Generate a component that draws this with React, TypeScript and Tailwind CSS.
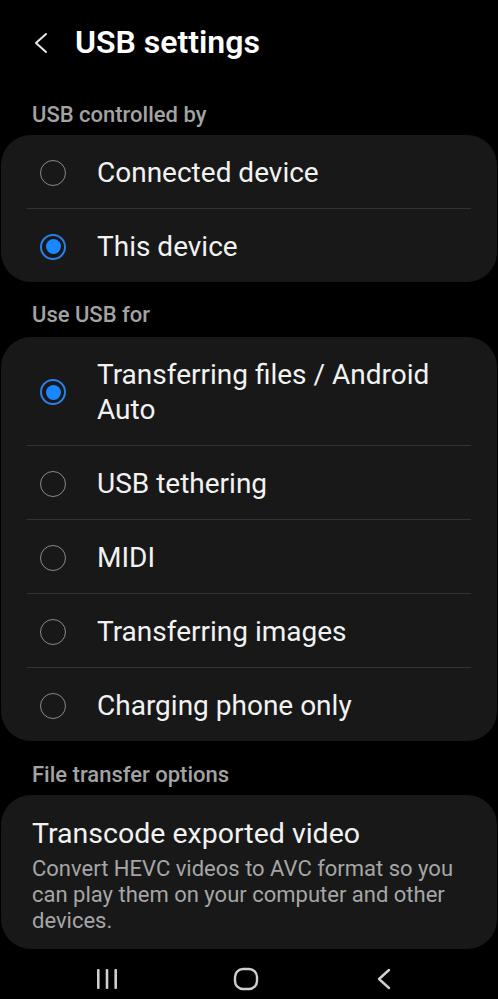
import React from 'react';

const font = { fontFamily: 'Roboto, "Noto Sans", sans-serif' };

const Radio = ({ checked }: { checked: boolean }) =>
  checked ? (
    <span className="w-[26px] h-[26px] shrink-0 rounded-full border-2 border-[#2a7fe8] flex items-center justify-center">
      <span className="w-[15px] h-[15px] rounded-full bg-[#1a86ff]" />
    </span>
  ) : (
    <span className="w-[26px] h-[26px] shrink-0 rounded-full border-[1.5px] border-[#8a8a8a]" />
  );

const Row = ({ label, checked, tall }: { label: string; checked?: boolean; tall?: boolean }) => (
  <div className={`flex items-center pl-[39px] pr-[26px] pt-[2px] ${tall ? 'h-[108px]' : 'h-[73px]'}`}>
    <Radio checked={!!checked} />
    <span className="ml-[31px] text-[28px] leading-[35px] text-[#f2f2f2] pr-[10px]">{label}</span>
  </div>
);

const Divider = () => <div className="mx-[26px] h-px bg-[#323232]" />;

const Label = ({ children, className }: { children: React.ReactNode; className: string }) => (
  <div className={`px-[32px] text-[22px] leading-[24px] font-medium text-[#a3a3a3] ${className}`}>{children}</div>
);

export default function App() {
  return (
    <div className="w-[498px] h-[999px] bg-black overflow-hidden flex flex-col" style={font}>
      {/* Header */}
      <div className="flex items-center pt-[22px] pl-[33px]">
        <svg width="16" height="22" viewBox="0 0 16 22" fill="none" className="mt-[2px]">
          <path d="M13 2 L3 11 L13 20" stroke="#e8e8e8" strokeWidth="2" strokeLinecap="round" strokeLinejoin="round" />
        </svg>
        <h1 className="ml-[26px] text-[32px] leading-[40px] font-semibold text-white">USB settings</h1>
      </div>

      <Label className="mt-[41px] mb-[8px]">USB controlled by</Label>
      <div className="mx-[1px] rounded-[30px] bg-[#181818]">
        <Row label="Connected device" />
        <Divider />
        <Row label="This device" checked />
      </div>

      <Label className="mt-[21px] mb-[10px]">Use USB for</Label>
      <div className="mx-[1px] rounded-[30px] bg-[#181818]">
        <Row label="Transferring files / Android Auto" checked tall />
        <Divider />
        <Row label="USB tethering" />
        <Divider />
        <Row label="MIDI" />
        <Divider />
        <Row label="Transferring images" />
        <Divider />
        <Row label="Charging phone only" />
      </div>

      <Label className="mt-[22px] mb-[8px]">File transfer options</Label>
      <div className="mx-[1px] rounded-[30px] bg-[#181818] pt-[22px] pb-[15px] pl-[31px] pr-[28px]">
        <div className="text-[28.5px] leading-[34px] text-[#f2f2f2]">Transcode exported video</div>
        <div className="mt-[5px] text-[22px] leading-[26px] text-[#a6a6a6]">
          Convert HEVC videos to AVC format so you can play them on your computer and other devices.
        </div>
      </div>

      {/* Navigation bar */}
      <div className="flex-1 flex items-center pt-[10px]">
        <svg width="24" height="22" viewBox="0 0 24 22" className="ml-[95px]">
          <rect x="2" y="1" width="2.6" height="20" rx="1" fill="#cfcfcf" />
          <rect x="10.7" y="1" width="2.6" height="20" rx="1" fill="#cfcfcf" />
          <rect x="19.4" y="1" width="2.6" height="20" rx="1" fill="#cfcfcf" />
        </svg>
        <svg width="26" height="24" viewBox="0 0 26 24" fill="none" className="ml-[114px]">
          <rect x="2" y="2" width="22" height="20" rx="8" stroke="#cfcfcf" strokeWidth="2.4" />
        </svg>
        <svg width="18" height="22" viewBox="0 0 18 22" fill="none" className="ml-[116px]">
          <path d="M14 2 L4 11 L14 20" stroke="#cfcfcf" strokeWidth="2.4" strokeLinecap="round" strokeLinejoin="round" />
        </svg>
      </div>
    </div>
  );
}
